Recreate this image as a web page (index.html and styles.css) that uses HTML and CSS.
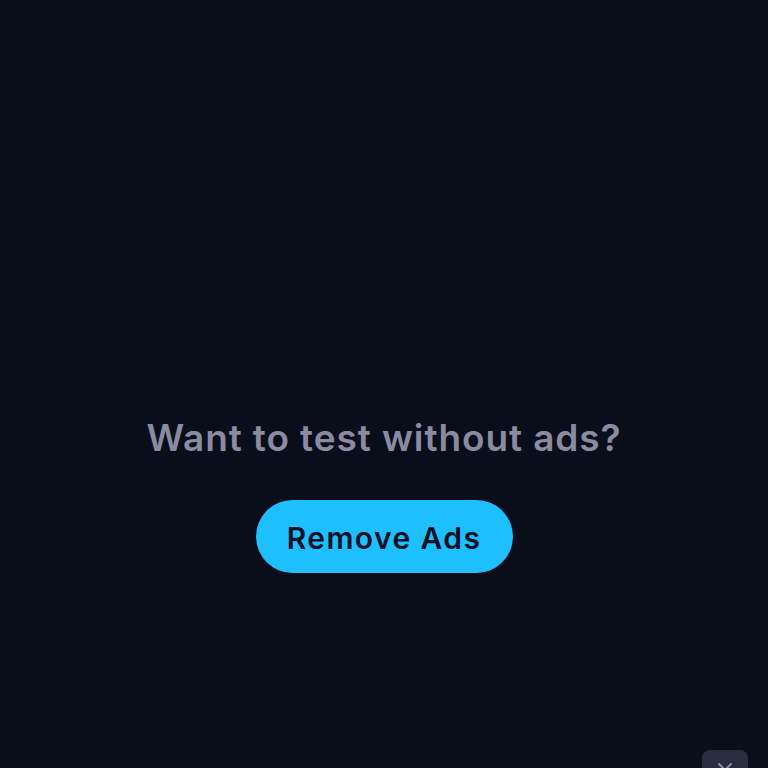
FILE: index.html
```html
<!DOCTYPE html>
<html>
<head>
<meta charset="utf-8">
<link rel="stylesheet" href="styles.css">
</head>
<body>
<main class="page">
  <section class="promo">
    <h1 class="promo-title">Want to test without ads?</h1>
    <button class="promo-btn">Remove Ads</button>
  </section>
  <button class="close-btn" aria-label="Close">
    <svg width="20" height="20" viewBox="0 0 20 20"><path d="M4 4 L16 16 M16 4 L4 16" stroke="#8a8ca0" stroke-width="2" stroke-linecap="round" fill="none"/></svg>
  </button>
</main>
</body>
</html>
```
FILE: styles.css
```css
html, body {
  margin: 0;
  padding: 0;
  background: #0a0d1a;
}
.page {
  position: relative;
  width: 768px;
  height: 768px;
  overflow: hidden;
  font-family: "Inter", "Noto Sans", sans-serif;
}
.promo {
  display: flex;
  flex-direction: column;
  align-items: center;
  padding-top: 412px;
}
.promo-title {
  margin: 0;
  font-size: 37px;
  font-weight: 600;
  color: #8a8ba0;
  line-height: 52px;
  letter-spacing: 0.9px;
}
.promo-btn {
  margin-top: 36px;
  width: 257px;
  height: 73px;
  border: none;
  border-radius: 37px;
  background: #1ebfff;
  color: #0b1124;
  font-family: inherit;
  font-size: 30px;
  font-weight: 600;
  letter-spacing: 1.4px;
  padding: 2px 0 0;
}
.close-btn {
  position: absolute;
  left: 702px;
  top: 750px;
  width: 46px;
  height: 46px;
  border: none;
  border-radius: 8px;
  background: #2a2d3e;
  padding: 0;
  display: flex;
  justify-content: center;
  padding-top: 10px;
}
```
